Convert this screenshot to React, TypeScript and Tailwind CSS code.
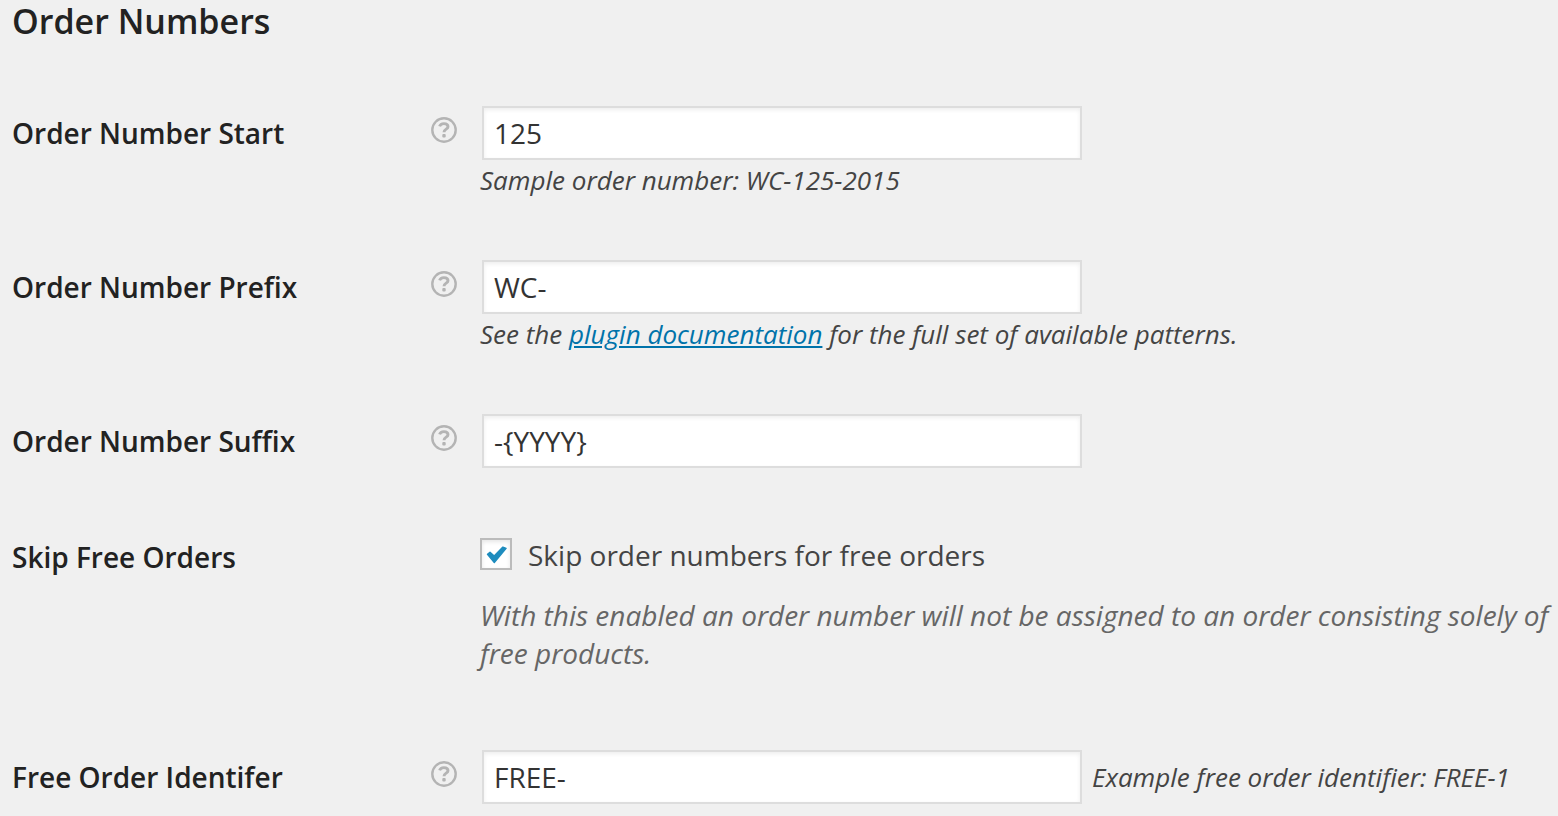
import { useState, type ReactNode } from "react";

function HelpTip({ text }: { text: string }) {
  return (
    <button type="button" aria-label={text} className="block text-[#b4b4b4]">
      <svg viewBox="0 0 28 28" className="h-7 w-7" fill="none" stroke="currentColor">
        <circle cx="14" cy="14" r="11.7" strokeWidth="2.4" />
        <path
          d="M9.600 10.400c.6-1.900 2.200-2.800 4.300-2.800 2.500 0 4.100 1.200 4.100 3.100 0 2.500-4 2.500-4 5.500"
          strokeWidth="2.9"
        />
        <rect x="12.300" y="18" width="3.400" height="3.400" rx="1" fill="currentColor" stroke="none" />
      </svg>
    </button>
  );
}

type RowProps = {
  label: string;
  htmlFor: string;
  help?: string;
  className?: string;
  children: ReactNode;
};

function Row({ label, htmlFor, help, className = "", children }: RowProps) {
  return (
    <div className={`flex items-start ${className}`}>
      <label htmlFor={htmlFor} className="w-[418px] shrink-0 pt-2 text-[28px] leading-[38px] font-semibold text-[#222]">
        {label}
      </label>
      <div className="w-[50px] shrink-0 pt-2.5">{help && <HelpTip text={help} />}</div>
      <div className="min-w-0 flex-1">{children}</div>
    </div>
  );
}

function TextField({ id, value }: { id: string; value: string }) {
  return (
    <input
      id={id}
      type="text"
      defaultValue={value}
      className="ml-0.5 block h-[54px] w-[600px] shrink-0 border-2 border-[#ddd] bg-white px-2.5 text-[28px] text-[#333] shadow-[inset_0_2px_4px_rgba(0,0,0,0.07)] outline-none"
    />
  );
}

export default function App() {
  const [skipFree, setSkipFree] = useState(true);

  return (
    <form className="min-h-screen bg-[#f0f0f0] pl-3 font-['Open_Sans',sans-serif] text-[#444]">
      <h2 className="text-[34px] leading-[42px] font-semibold text-[#222]">Order Numbers</h2>

      <Row label="Order Number Start" htmlFor="start" help="Starting order number" className="mt-16 h-[154px]">
        <TextField id="start" value="125" />
        <p className="mt-px text-[26px] leading-[38px] italic">Sample order number: WC-125-2015</p>
      </Row>

      <Row label="Order Number Prefix" htmlFor="prefix" help="Order number prefix" className="h-[154px]">
        <TextField id="prefix" value="WC-" />
        <p className="mt-px text-[26px] leading-[38px] italic">
          See the{" "}
          <a href="#documentation" className="text-[#0073aa] underline">
            plugin documentation
          </a>{" "}
          for the full set of available patterns.
        </p>
      </Row>

      <Row label="Order Number Suffix" htmlFor="suffix" help="Order number suffix" className="h-[116px]">
        <TextField id="suffix" value="-{YYYY}" />
      </Row>

      <Row label="Skip Free Orders" htmlFor="skip-free" className="h-[220px]">
        <label className="flex items-start pt-1.5 text-[28px] leading-[38px]">
          <span className="relative mt-0.5 mr-4 block h-8 w-8">
            <input
              id="skip-free"
              type="checkbox"
              checked={skipFree}
              onChange={(e) => setSkipFree(e.target.checked)}
              className="block h-8 w-8 appearance-none border-2 border-[#bbb] bg-white shadow-[inset_0_2px_4px_rgba(0,0,0,0.1)]"
            />
            {skipFree && (
              <svg
                viewBox="0 0 32 32"
                className="pointer-events-none absolute inset-0 h-8 w-8"
                fill="#1e8cbe"
                stroke="#1e8cbe"
                strokeLinejoin="round"
              >
                <path d="M7.500 16.300l2.500-2 4.200 3.800 8.700-9 3.200 1.200-11.800 14.200z" strokeWidth="1.4" />
              </svg>
            )}
          </span>
          Skip order numbers for free orders
        </label>
        <p className="mt-[22px] text-[28px] leading-[38px] text-[#666] italic">
          With this enabled an order number will not be assigned to an order consisting solely of free products.
        </p>
      </Row>

      <Row label="Free Order Identifer" htmlFor="free-id" help="Free order identifier">
        <div className="flex items-center">
          <TextField id="free-id" value="FREE-" />
          <span className="ml-2.5 text-[26px] leading-[38px] whitespace-nowrap italic">
            Example free order identifier: FREE-1
          </span>
        </div>
      </Row>
    </form>
  );
}
